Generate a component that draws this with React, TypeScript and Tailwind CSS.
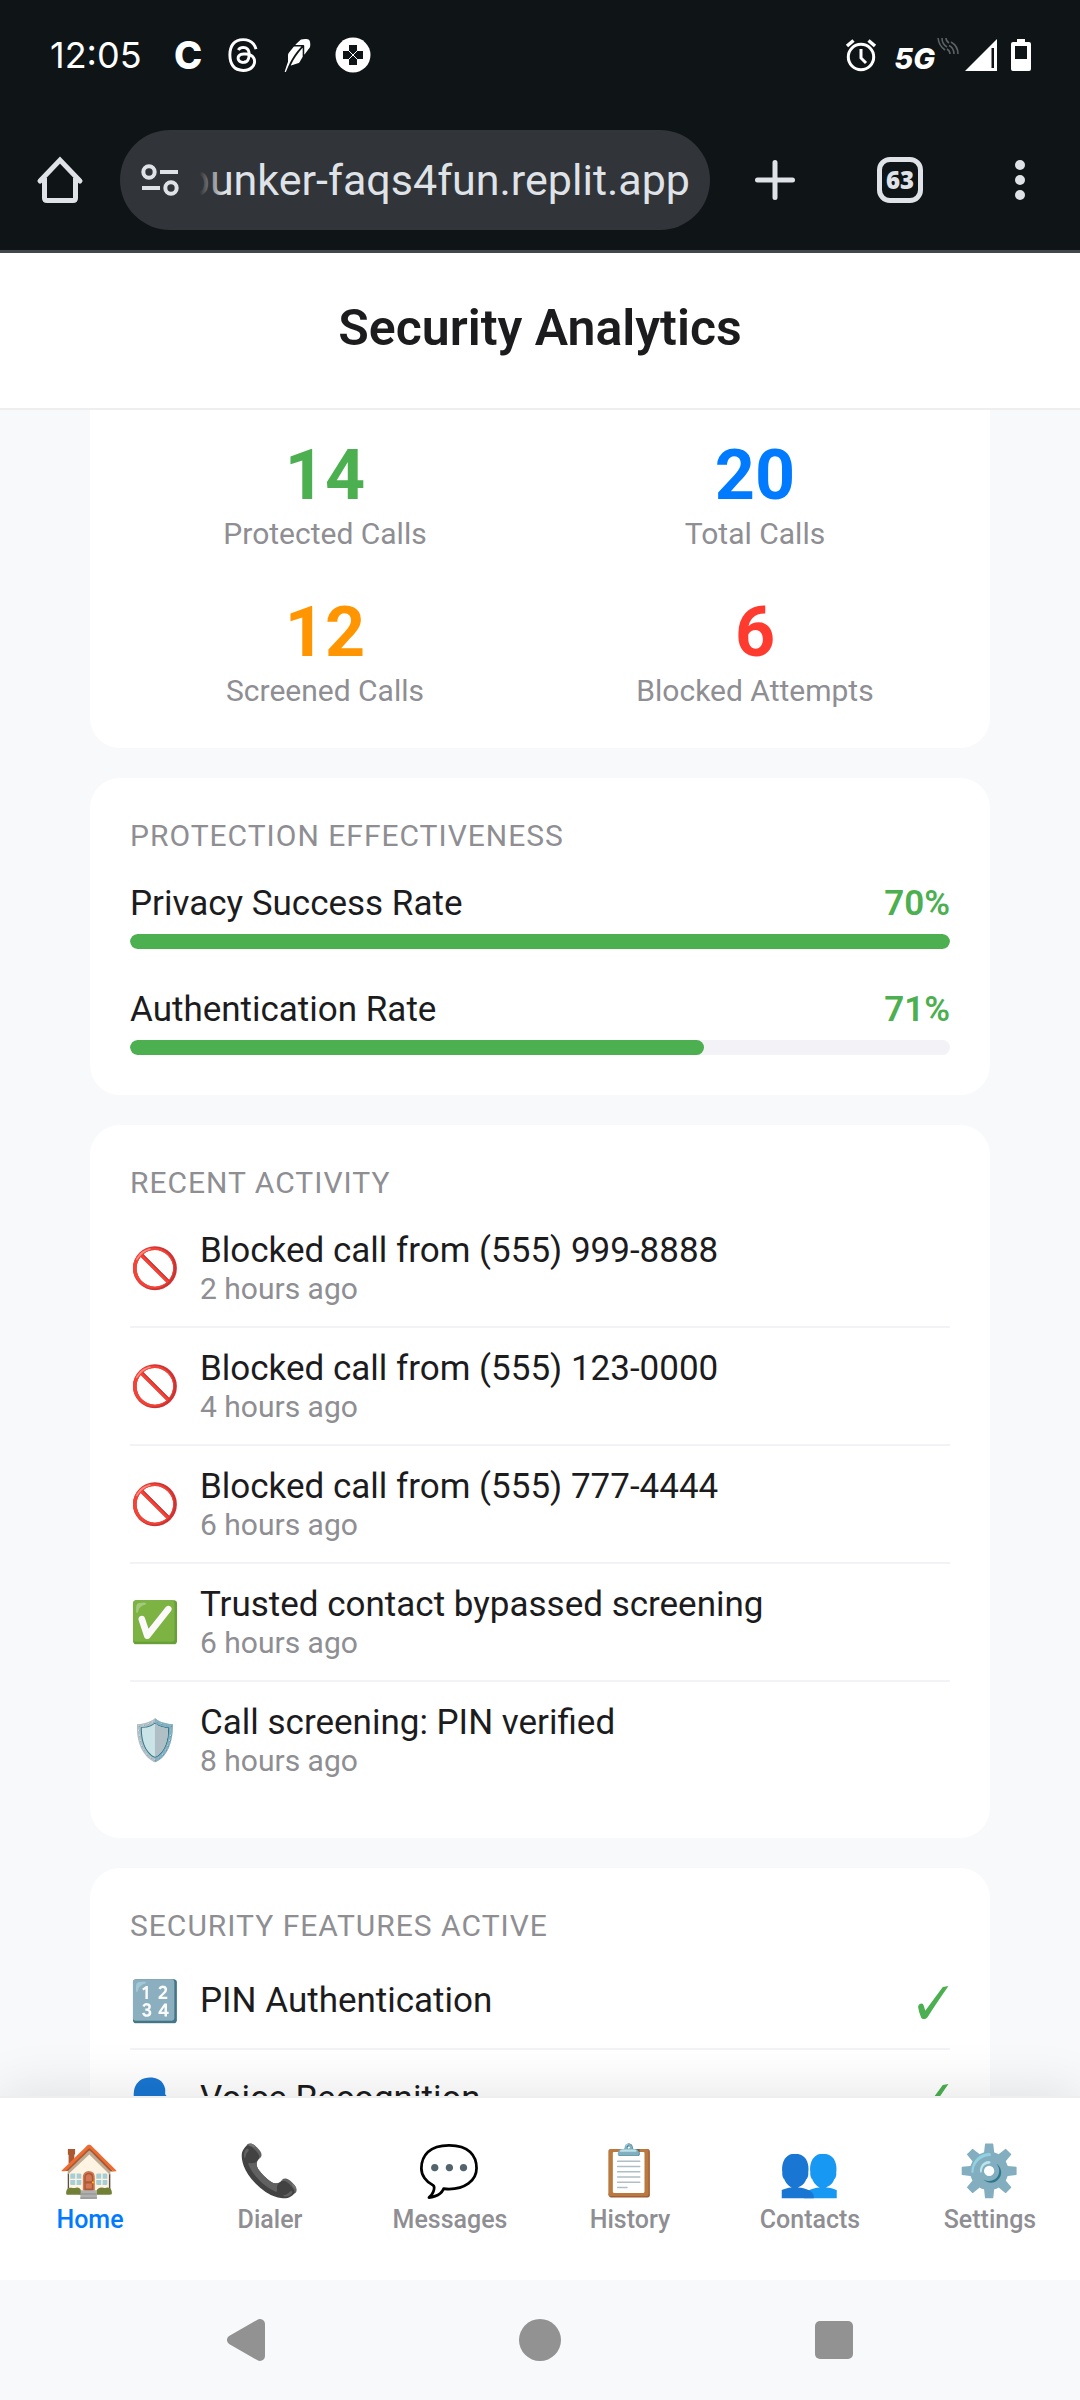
import type { ReactNode } from "react";
import { SiRobinhood } from "react-icons/si";
import { FaThreads } from "react-icons/fa6";

const stats = [
  { value: "14", label: "Protected Calls", color: "text-[#4caf50]" },
  { value: "20", label: "Total Calls", color: "text-[#007aff]" },
  { value: "12", label: "Screened Calls", color: "text-[#ff9500]" },
  { value: "6", label: "Blocked Attempts", color: "text-[#ff3b30]" },
];

const rates = [
  { label: "Privacy Success Rate", value: "70%", fill: 100 },
  { label: "Authentication Rate", value: "71%", fill: 70 },
];

const activity = [
  { icon: "🚫", title: "Blocked call from (555) 999-8888", time: "2 hours ago" },
  { icon: "🚫", title: "Blocked call from (555) 123-0000", time: "4 hours ago" },
  { icon: "🚫", title: "Blocked call from (555) 777-4444", time: "6 hours ago" },
  { icon: "✅", title: "Trusted contact bypassed screening", time: "6 hours ago" },
  { icon: "🛡️", title: "Call screening: PIN verified", time: "8 hours ago" },
];

const features = [
  { icon: "🔢", label: "PIN Authentication" },
  { icon: "🗣️", label: "Voice Recognition" },
];

const tabs = [
  { icon: "🏠", label: "Home" },
  { icon: "📞", label: "Dialer" },
  { icon: "💬", label: "Messages" },
  { icon: "📋", label: "History" },
  { icon: "👥", label: "Contacts" },
  { icon: "⚙️", label: "Settings" },
];

function StatusBar() {
  return (
    <div className="flex h-[110px] items-center justify-between pl-[50px] pr-[49px] text-white">
      <div className="flex items-center">
        <span className="w-[124px] font-['Inter',sans-serif] text-[36px] leading-none">12:05</span>
        <span className="w-[53px] font-['Inter',sans-serif] text-[38px] font-extrabold leading-none">C</span>
        <FaThreads className="h-[36px] w-[32px]" aria-label="Threads" />
        <SiRobinhood className="ml-[22px] h-[33px] w-[33px]" aria-label="Robinhood" />
        <svg className="ml-[21px] size-[36px]" viewBox="0 0 36 36" aria-hidden="true">
          <circle cx="18" cy="18" r="17.5" fill="#fff" />
          <path d="M14 8h8v6h6v8h-6v6h-8v-6H8v-8h6z" fill="#0f1417" />
          <path d="M13.500 13.500l9 9M22.500 13.500l-9 9" stroke="#fff" strokeWidth="1" />
        </svg>
      </div>
      <div className="flex items-center">
        <svg className="h-[34px] w-[32px]" viewBox="0 0 32 34" fill="none" stroke="#fff" aria-label="Alarm set">
          <circle cx="16" cy="19" r="12.7" strokeWidth="3" />
          <path d="M16 11v9l5 5" strokeWidth="3" />
          <path d="M2 8l6.500-5.500M30 8l-6.500-5.500" strokeWidth="3.500" />
        </svg>
        <span className="ml-[17px] mr-[2px] mt-[6px] font-['Inter',sans-serif] text-[29px] font-extrabold italic leading-none">5G</span>
        <svg className="mb-[18px] h-[16px] w-[22px]" viewBox="0 0 22 16" fill="none" stroke="#5d6163" strokeWidth="1.600" aria-hidden="true">
          <path d="M1 0q1 8 7 12M5 0q0 6 5 9M9 0q0 3 3 5" />
          <path d="M21 16q0-8-7-12M17 16q0-6-5-8.500M13 16q0-3-3-5" />
        </svg>
        <svg className="ml-[6px] size-[32px]" viewBox="0 0 32 32" aria-label="Signal">
          <path d="M32 0v32H0z" fill="#fff" />
          <path d="M26.500 9h2.500v20h-2.500z" fill="#0f1417" />
        </svg>
        <svg className="ml-[14px] h-[32px] w-[20px]" viewBox="0 0 20 32" aria-label="Battery">
          <path d="M6 0h8v3h4q2 0 2 2v25q0 2-2 2H2q-2 0-2-2V5q0-2 2-2h4z" fill="#fff" />
          <path d="M4 7h12v13H4z" fill="#0f1417" />
        </svg>
      </div>
    </div>
  );
}

function BrowserBar() {
  return (
    <div className="flex h-[143px] items-center border-b-[3px] border-[#41474c] pl-[36px] text-[#dfe2e7]">
      <button aria-label="Home page" className="mr-[36px] shrink-0">
        <svg className="size-[48px]" viewBox="0 0 48 48" fill="none" stroke="currentColor" strokeWidth="5" strokeLinejoin="round" aria-hidden="true">
          <path d="M4 25L24 4l20 21" strokeLinecap="round" strokeLinejoin="miter" />
          <path d="M8.500 22v20q0 2.500 2.500 2.500h26q2.500 0 2.500-2.500V22" />
        </svg>
      </button>
      <div className="flex h-[100px] min-w-0 flex-1 items-center rounded-full bg-[#313438] pl-[20px] pr-[20px]">
        <button aria-label="Site settings" className="shrink-0">
          <svg className="size-[40px]" viewBox="0 0 40 40" fill="none" stroke="currentColor" strokeWidth="4" aria-hidden="true">
            <circle cx="9" cy="12" r="5.700" />
            <path d="M20 12h18M2 28h18" />
            <circle cx="31" cy="28" r="5.700" />
          </svg>
        </button>
        <div className="relative min-w-0 flex-1">
          <input
            aria-label="Address"
            readOnly
            value="bunker-faqs4fun.replit.app"
            className="block w-full bg-transparent text-right text-[43px] leading-[56px] outline-none"
          />
          <div className="absolute left-0 top-0 h-full w-[44px] bg-linear-to-r from-[#313438] from-45% to-transparent" />
        </div>
      </div>
      <button aria-label="New tab" className="flex w-[130px] justify-center">
        <svg className="size-[40px]" viewBox="0 0 40 40" stroke="currentColor" strokeWidth="5" strokeLinecap="round" aria-hidden="true">
          <path d="M20 2.500v35M2.500 20h35" />
        </svg>
      </button>
      <button aria-label="Open tabs" className="flex w-[120px] justify-center">
        <span className="flex size-[46px] items-center justify-center rounded-[13px] border-[5px] border-current font-['Open_Sans',sans-serif] text-[24px] font-extrabold leading-none">
          63
        </span>
      </button>
      <button aria-label="More options" className="flex w-[120px] flex-col items-center gap-[5px]">
        <span className="size-[10px] rounded-full bg-current" />
        <span className="size-[10px] rounded-full bg-current" />
        <span className="size-[10px] rounded-full bg-current" />
      </button>
    </div>
  );
}

function Card({ title, children }: { title: string; children: ReactNode }) {
  return (
    <section className="rounded-[30px] bg-white p-[40px]">
      <h2 className="text-[30px] leading-[35px] tracking-[1px] text-[#8e8e93]">{title}</h2>
      {children}
    </section>
  );
}

function Emoji({ children }: { children: string }) {
  return (
    <span aria-hidden="true" className="mr-[20px] w-[50px] pt-[2px] font-['Noto_Color_Emoji'] text-[40px] leading-[48px]">
      {children}
    </span>
  );
}

export default function App() {
  return (
    <div className="flex h-screen flex-col bg-[#f8f9fb] font-['Roboto',sans-serif] text-[#1c1c1e]">
      <div className="shrink-0 bg-[#0f1417]">
        <StatusBar />
        <BrowserBar />
      </div>

      <header className="shrink-0 border-b-2 border-[#eeeeee] bg-white pb-[50px] pt-[46px]">
        <h1 className="text-center text-[50px] font-semibold leading-[59px]">Security Analytics</h1>
      </header>

      <main className="flex min-h-0 flex-1 flex-col gap-[30px] overflow-y-auto px-[90px] [scrollbar-width:none]">
        <section className="grid shrink-0 grid-cols-2 gap-[40px] rounded-b-[30px] bg-white px-[40px] pb-[40px] pt-[24px] text-center">
          {stats.map((s) => (
            <div key={s.label}>
              <div className={`text-[70px] font-bold leading-[82px] ${s.color}`}>{s.value}</div>
              <div className="text-[30px] leading-[35px] text-[#8e8e93]">{s.label}</div>
            </div>
          ))}
        </section>

        <Card title="PROTECTION EFFECTIVENESS">
          <div className="mt-[30px] flex flex-col gap-[40px]">
            {rates.map((r) => (
              <div key={r.label}>
                <div className="mb-[10px] flex justify-between text-[35px] leading-[41px]">
                  <span>{r.label}</span>
                  <span className="font-semibold text-[#4caf50]">{r.value}</span>
                </div>
                <div className="h-[15px] overflow-hidden rounded-lg bg-[#f2f2f7]">
                  <div className="h-full rounded-lg bg-[#4caf50]" style={{ width: `${r.fill}%` }} />
                </div>
              </div>
            ))}
          </div>
        </Card>

        <Card title="RECENT ACTIVITY">
          <ul className="mt-[10px]">
            {activity.map((a) => (
              <li key={a.title} className="flex items-center border-b-2 border-[#f2f2f7] py-[20px] last:border-b-0">
                <Emoji>{a.icon}</Emoji>
                <div>
                  <div className="text-[35px] leading-[41px]">{a.title}</div>
                  <div className="text-[30px] leading-[35px] text-[#8e8e93]">{a.time}</div>
                </div>
              </li>
            ))}
          </ul>
        </Card>

        <Card title="SECURITY FEATURES ACTIVE">
          <ul className="mt-[10px]">
            {features.map((f) => (
              <li key={f.label} className="flex h-[97px] items-center border-b-2 border-[#f2f2f7] last:border-b-0">
                <Emoji>{f.icon}</Emoji>
                <span className="flex-1 text-[35px] leading-[41px]">{f.label}</span>
                <svg className="mr-[1px] mt-[4px] h-[33px] w-[31px]" viewBox="0 0 30 32" aria-label="Active">
                  <path d="M0 20q1-3 3.500-3 1.500 0 2 2l1.500 5L24 1l5.500-1Q17 18 10 29q-1.500 3-4.500 3-2 0-2.500-1.500Q.500 24 0 20z" fill="#4caf50" />
                </svg>
              </li>
            ))}
          </ul>
        </Card>
      </main>

      <nav className="relative z-10 grid shrink-0 grid-cols-6 border-t-2 border-[#eeeeee] bg-white pb-[46px] pt-[44px] shadow-[0_-5px_50px_rgba(0,0,0,0.1)]">
        {tabs.map((t, i) => (
          <a
            key={t.label}
            href="#"
            className={
              i === 0
                ? "flex flex-col items-center gap-[4px] text-[#007aff]"
                : "flex flex-col items-center gap-[4px] text-[#8e8e93]"
            }
          >
            <span aria-hidden="true" className="font-['Noto_Color_Emoji'] text-[50px] leading-[59px]">
              {t.icon}
            </span>
            <span className="text-[25px] font-medium leading-[29px]">{t.label}</span>
          </a>
        ))}
      </nav>

      <div className="relative z-10 grid h-[120px] shrink-0 grid-cols-3 place-items-center bg-[#f8f9fb] px-[99px] text-[#929292]">
        <button aria-label="Back">
          <svg className="h-[42px] w-[38px]" viewBox="0 0 38 42" fill="currentColor" stroke="currentColor" strokeWidth="10" strokeLinejoin="round" aria-hidden="true">
            <path d="M33 5v32L5 21z" />
          </svg>
        </button>
        <button aria-label="Home screen" className="size-[42px] rounded-full bg-current" />
        <button aria-label="Recent apps" className="size-[38px] rounded-[5px] bg-current" />
      </div>
    </div>
  );
}
